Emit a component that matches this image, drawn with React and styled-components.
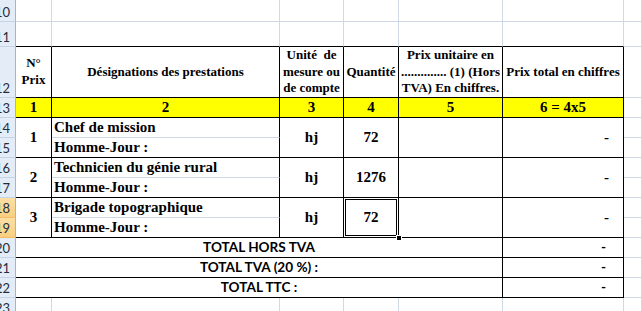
import React from 'react';
import styled, { createGlobalStyle } from 'styled-components';

const GRID = '#d0d7e5';
const DARK = '#000';
const SERIF = '"Liberation Serif", "Times New Roman", serif';
const SANS = 'Lato, "Liberation Sans", Arial, sans-serif';

const Global = createGlobalStyle`
  html, body { margin: 0; padding: 0; background: #fff; overflow: hidden; }
  *, *::before, *::after { box-sizing: border-box; }
`;

const Sheet = styled.div`
  display: grid;
  grid-template-columns: 16px 36px 228px 64px 55px 104px 121px 1fr;
  grid-template-rows: 22px 25px 51px repeat(11, 20px);
  width: 642px;
  height: 311px;
  overflow: hidden;
  background: #fff;
`;

const RowHead = styled.div`
  grid-column: 1;
  grid-row: ${(p) => p.$r};
  display: flex;
  align-items: flex-end;
  justify-content: flex-end;
  padding: 0 5px 1px 0;
  overflow: hidden;
  white-space: nowrap;
  background: ${(p) => (p.$sel ? 'linear-gradient(#fcdfa4, #f8cf80)' : '#e4ecf7')};
  border-right: 1px solid ${(p) => (p.$sel ? '#f2a541' : '#9eb6ce')};
  border-bottom: 1px solid ${(p) => (p.$sel ? '#f4bd63' : '#c4d3e6')};
  font-family: ${SANS};
  font-size: 13px;
  line-height: 15px;
  color: #1f2d3d;
`;

const Cell = styled.div`
  grid-row: ${(p) => p.$r} / span ${(p) => p.$rs || 1};
  grid-column: ${(p) => p.$c} / span ${(p) => p.$cs || 1};
  position: relative;
  min-width: 0;
  border-right: 1px solid ${(p) => (p.$dr ? DARK : GRID)};
  border-bottom: 1px solid ${(p) => (p.$db ? DARK : GRID)};
  background: #fff;
  z-index: ${(p) => (p.$sel ? 2 : 'auto')};
`;

const SerifCell = styled(Cell)`
  display: flex;
  align-items: center;
  justify-content: center;
  font-family: ${SERIF};
  font-weight: bold;
  font-size: 15px;
  line-height: 19px;
  color: #000;
  white-space: nowrap;
`;

const HeadCell = styled(SerifCell)`
  font-size: 13px;
  line-height: 16.7px;
  text-align: center;
  white-space: pre;
`;

const IndexCell = styled(SerifCell)`
  background: #ffff00;
`;

const LabelCell = styled(SerifCell)`
  justify-content: flex-start;
  align-items: flex-end;
  padding-left: 2px;
`;

const DashCell = styled(SerifCell)`
  justify-content: flex-end;
  padding-right: 14px;
`;

const TotalLabel = styled(Cell)`
  display: flex;
  align-items: center;
  justify-content: center;
  font-family: ${SANS};
  font-weight: bold;
  font-size: 13.6px;
  line-height: 19px;
  color: #000;
  white-space: pre;
`;

const TotalDash = styled(TotalLabel)`
  justify-content: flex-end;
  padding-right: 17px;
`;

const Selection = styled.div`
  position: absolute;
  inset: 1px;
  border: 1px solid #000;
  pointer-events: none;
`;

const FillHandle = styled.div`
  position: absolute;
  right: -4px;
  bottom: -4px;
  width: 6px;
  height: 6px;
  background: #000;
  border: 1px solid #fff;
`;

const headers = [
  'N°\nPrix',
  'Désignations des prestations',
  'Unité  de\nmesure ou\nde compte',
  'Quantité',
  'Prix unitaire en\n.............. (1) (Hors\nTVA) En chiffres.',
  'Prix total en chiffres',
];

const indexes = ['1', '2', '3', '4', '5', '6 = 4x5'];

const items = [
  { n: '1', label: 'Chef de mission', unit: 'hj', qty: '72' },
  { n: '2', label: 'Technicien du génie rural', unit: 'hj', qty: '1276' },
  { n: '3', label: 'Brigade topographique', unit: 'hj', qty: '72', sel: true },
];

const totals = ['TOTAL HORS TVA', 'TOTAL TVA (20 %) :', 'TOTAL TTC :'];

const tableCols = [2, 3, 4, 5, 6, 7];

export default function App() {
  const rowNums = Array.from({ length: 14 }, (_, i) => 10 + i);
  const g = (excelRow) => excelRow - 9;

  return (
    <>
      <Global />
      <Sheet>
        {rowNums.map((n) => (
          <RowHead key={`h${n}`} $r={g(n)} $sel={n === 18 || n === 19}>
            {n}
          </RowHead>
        ))}

        {/* Row 10 */}
        {[2, 3, 4, 5, 6, 7, 8].map((c) => (
          <Cell key={`r10-${c}`} $r={g(10)} $c={c} />
        ))}

        {/* Row 11 */}
        {[2, 3, 4, 5, 6, 7, 8].map((c) => (
          <Cell key={`r11-${c}`} $r={g(11)} $c={c} $db={c <= 7} />
        ))}

        {/* Row 12 headers */}
        {headers.map((t, i) => (
          <HeadCell key={`hd${i}`} $r={g(12)} $c={tableCols[i]} $dr $db>
            {t}
          </HeadCell>
        ))}
        <Cell $r={g(12)} $c={8} />

        {/* Row 13 index */}
        {indexes.map((t, i) => (
          <IndexCell key={`ix${i}`} $r={g(13)} $c={tableCols[i]} $dr $db>
            {t}
          </IndexCell>
        ))}
        <Cell $r={g(13)} $c={8} />

        {/* Rows 14-19 items */}
        {items.map((it, i) => {
          const r = g(14 + i * 2);
          return (
            <React.Fragment key={`it${i}`}>
              <SerifCell $r={r} $rs={2} $c={2} $dr $db>{it.n}</SerifCell>
              <LabelCell $r={r} $c={3} $dr>{it.label}</LabelCell>
              <LabelCell $r={r + 1} $c={3} $dr $db>Homme-Jour :</LabelCell>
              <SerifCell $r={r} $rs={2} $c={4} $dr $db>{it.unit}</SerifCell>
              <SerifCell $r={r} $rs={2} $c={5} $dr $db $sel={it.sel}>
                {it.qty}
                {it.sel && (
                  <>
                    <Selection />
                    <FillHandle />
                  </>
                )}
              </SerifCell>
              <SerifCell $r={r} $rs={2} $c={6} $dr $db />
              <DashCell $r={r} $rs={2} $c={7} $dr $db>-</DashCell>
              <Cell $r={r} $c={8} />
              <Cell $r={r + 1} $c={8} />
            </React.Fragment>
          );
        })}

        {/* Rows 20-22 totals */}
        {totals.map((t, i) => {
          const r = g(20 + i);
          return (
            <React.Fragment key={`tt${i}`}>
              <TotalLabel $r={r} $c={2} $cs={5} $dr $db>{t}</TotalLabel>
              <TotalDash $r={r} $c={7} $dr $db>-</TotalDash>
              <Cell $r={r} $c={8} />
            </React.Fragment>
          );
        })}

        {/* Row 23 */}
        {[2, 3, 4, 5, 6, 7, 8].map((c) => (
          <Cell key={`r23-${c}`} $r={g(23)} $c={c} />
        ))}
      </Sheet>
    </>
  );
}
